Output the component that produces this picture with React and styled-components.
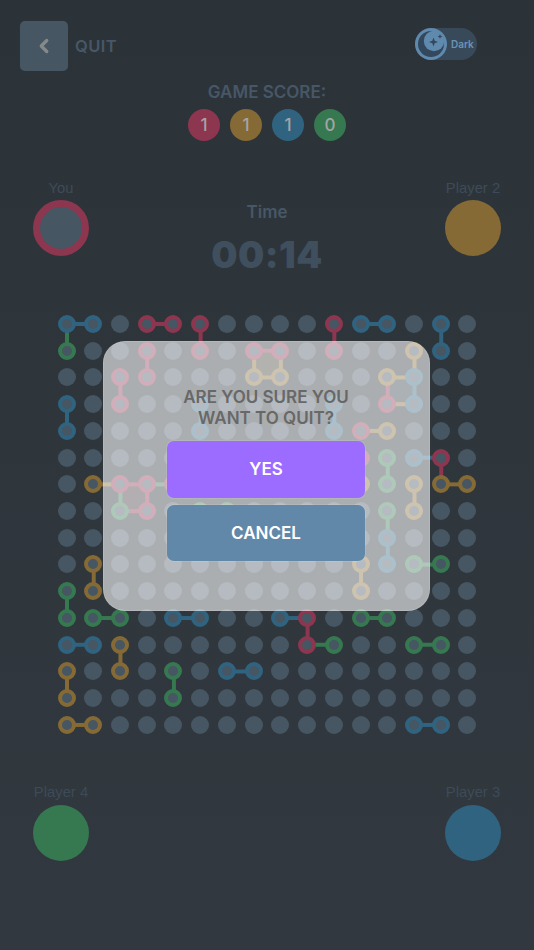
import styled, { createGlobalStyle } from "styled-components";
import { ChevronLeft } from "lucide-react";

const colors = { r: "#8c3650", y: "#856a35", b: "#30637f", g: "#367850" };
const tints = { r: "#8c365033", y: "#856a3533", b: "#30637f33" };
const dotGray = "#465663";
const PITCH = 26.73;

const GlobalStyle = createGlobalStyle`
  html, body {
    margin: 0;
    padding: 0;
    background: #2d343a;
  }
  * {
    box-sizing: border-box;
  }
`;

const Page = styled.div`
  position: relative;
  width: 534px;
  height: 950px;
  overflow: hidden;
  background: linear-gradient(180deg, #2c3338 0%, #31383f 100%);
  font-family: Inter, Roboto, sans-serif;
`;

const Header = styled.header`
  display: flex;
  align-items: flex-start;
  justify-content: space-between;
  padding: 21px 57px 0 20px;
  height: 81px;
`;

const QuitGroup = styled.div`
  display: flex;
  align-items: center;
  gap: 7px;
`;

const BackButton = styled.button`
  display: flex;
  align-items: center;
  justify-content: center;
  width: 48px;
  height: 50px;
  padding: 0;
  border: none;
  border-radius: 5px;
  background: ${dotGray};
  color: #858a88;
`;

const QuitLabel = styled.span`
  font-size: 16.5px;
  font-weight: 600;
  letter-spacing: 0.4px;
  color: #475767;
`;

const Toggle = styled.div`
  display: flex;
  align-items: center;
  width: 62px;
  height: 32px;
  margin-top: 7px;
  border-radius: 16px;
  background: #38495a;
`;

const ToggleText = styled.span`
  margin-left: 4px;
  font-size: 10px;
  font-weight: 600;
  color: #6b93b5;
`;

const ScoreBlock = styled.section`
  display: flex;
  flex-direction: column;
  align-items: center;
  gap: 6px;
  height: 99px;
`;

const SectionTitle = styled.h2`
  margin: 0;
  font-size: 17px;
  line-height: 22px;
  font-weight: 600;
  color: #475767;
`;

const ScoreRow = styled.div`
  display: flex;
  gap: 10px;
`;

const ScoreBadge = styled.div`
  display: flex;
  align-items: center;
  justify-content: center;
  width: 32px;
  height: 32px;
  border-radius: 50%;
  background: ${(p) => colors[p.$tone]};
  font-size: 17px;
  font-weight: 500;
  color: #a3a5a5;
`;

const PlayersRow = styled.section`
  display: flex;
  justify-content: space-between;
  padding: 0 33px;
  height: ${(p) => p.$height}px;
`;

const Player = styled.div`
  display: flex;
  flex-direction: column;
  align-items: center;
  width: 56px;
`;

const PlayerName = styled.span`
  font-family: "Liberation Sans", Arial, sans-serif;
  font-size: 14.8px;
  line-height: 16px;
  white-space: nowrap;
  color: #3d4b58;
`;

const Avatar = styled.div`
  flex: none;
  width: 56px;
  height: 56px;
  margin-top: ${(p) => p.$gap ?? 4}px;
  border-radius: 50%;
  background: ${(p) => (p.$active ? dotGray : colors[p.$tone])};
  border: ${(p) => (p.$active ? `7.5px solid ${colors[p.$tone]}` : "none")};
`;

const Clock = styled.div`
  display: flex;
  flex-direction: column;
  align-items: center;
  padding-top: 21px;
`;

const Timer = styled.div`
  margin-top: 10px;
  font-size: 37px;
  line-height: 44px;
  font-weight: 900;
  letter-spacing: 0.5px;
  color: #3f4f5e;
`;

const Board = styled.div`
  position: relative;
  display: grid;
  grid-template-columns: repeat(16, 18px);
  grid-auto-rows: 18px;
  gap: 8.73px;
  width: 419px;
  margin-left: 57.6px;
  margin-bottom: 50px;
`;

const Links = styled.svg`
  position: absolute;
  left: 0;
  top: 0;
  width: 419px;
  height: 419px;
`;

const Dot = styled.div`
  position: relative;
  border-radius: 50%;
  background: ${dotGray};
  border: ${(p) => (p.$tone ? `4.6px solid ${colors[p.$tone]}` : "none")};
`;

const Dialog = styled.div`
  position: absolute;
  left: 103px;
  top: 341px;
  display: flex;
  flex-direction: column;
  align-items: center;
  width: 327px;
  height: 270px;
  padding: 46px 1px 0 0;
  border-radius: 22px;
  background: rgba(255, 255, 255, 0.6);
  box-shadow: inset 0 0 0 1px rgba(255, 255, 255, 0.12);
`;

const DialogTitle = styled.h3`
  margin: 0 0 12px;
  font-size: 17px;
  line-height: 21px;
  font-weight: 600;
  text-align: center;
  color: #686868;
`;

const DialogButton = styled.button`
  flex: none;
  width: 198px;
  height: 56.5px;
  margin-bottom: 7px;
  border: none;
  border-radius: 7px;
  background: ${(p) => (p.$primary ? "#9c6bff" : "#6288a9")};
  box-shadow: 0 0 0 1px rgba(255, 255, 255, 0.1);
  font-family: inherit;
  font-size: 17px;
  font-weight: 600;
  color: #ffffff;
`;

const rows = [
  "bb.rrr....rbb.b.",
  "g..r.r.rr.r..yb.",
  "..rr...yy...yb..",
  "b.r..b....b.rb..",
  "b....b....bry...",
  "...........rgbr.",
  ".yrrr......ygyyy",
  "..gr.gg.....gy..",
  "............b...",
  ".y.........ybgg.",
  "gy.........y....",
  "ggg.bb..br.gg...",
  "bby......rg..gg.",
  "y.y.g.bb........",
  "y...g...........",
  "yy...........bb.",
];

const links = [
  ["b", 0, 0, 1, 0], ["g", 0, 0, 0, 1], ["r", 3, 0, 4, 0], ["r", 5, 0, 5, 1],
  ["r", 10, 0, 10, 1], ["b", 11, 0, 12, 0], ["b", 14, 0, 14, 1], ["r", 3, 1, 3, 2],
  ["r", 2, 2, 2, 3], ["r", 7, 1, 8, 1], ["y", 7, 1, 7, 2], ["y", 7, 2, 8, 2],
  ["y", 8, 1, 8, 2], ["y", 13, 1, 13, 2], ["y", 12, 2, 13, 2], ["r", 12, 2, 12, 3],
  ["y", 12, 3, 13, 3], ["b", 13, 2, 13, 3], ["b", 0, 3, 0, 4], ["b", 5, 3, 5, 4],
  ["b", 10, 3, 10, 4], ["y", 11, 4, 12, 4], ["b", 13, 5, 14, 5], ["r", 14, 5, 14, 6],
  ["y", 14, 6, 15, 6], ["g", 12, 5, 12, 6], ["y", 13, 6, 13, 7], ["g", 12, 7, 12, 8],
  ["b", 12, 8, 12, 9], ["g", 13, 9, 14, 9], ["y", 11, 9, 11, 10], ["y", 1, 6, 2, 6],
  ["r", 2, 6, 3, 6], ["g", 2, 6, 2, 7], ["r", 2, 7, 3, 7], ["r", 3, 6, 3, 7],
  ["g", 3, 6, 4, 6], ["r", 11, 5, 11, 6], ["g", 5, 7, 6, 7], ["y", 1, 9, 1, 10],
  ["g", 0, 10, 0, 11], ["g", 1, 11, 2, 11], ["b", 4, 11, 5, 11], ["b", 8, 11, 9, 11],
  ["r", 9, 11, 9, 12], ["g", 9, 12, 10, 12], ["g", 11, 11, 12, 11], ["g", 13, 12, 14, 12],
  ["b", 0, 12, 1, 12], ["y", 2, 12, 2, 13], ["y", 0, 13, 0, 14], ["g", 4, 13, 4, 14],
  ["b", 6, 13, 7, 13], ["y", 0, 15, 1, 15], ["b", 13, 15, 14, 15],
];

const boxes = [
  ["y", 7, 1],
  ["r", 2, 6],
  ["b", 12, 2],
];

const at = (n) => 9 + n * PITCH;

function MoonIcon() {
  return (
    <svg width="32" height="32" viewBox="0 0 32 32" style={{ flex: "none" }}>
      <circle cx="16" cy="16" r="16" fill="#5f8aae" />
      <circle cx="16" cy="16" r="13" fill="#33485c" />
      <circle cx="19" cy="13" r="10.2" fill="#5f8aae" />
      <path d="M18.5 9.5l1.2 3.3 3.3 1.2-3.3 1.2-1.2 3.3-1.2-3.3-3.3-1.2 3.3-1.2Z" fill="#33485c" />
      <path d="M25 6l.7 1.8 1.8.7-1.8.7-.7 1.8-.7-1.8-1.8-.7 1.8-.7Z" fill="#33485c" />
    </svg>
  );
}

export default function App() {
  return (
    <Page>
      <GlobalStyle />
      <Header>
        <QuitGroup>
          <BackButton>
            <ChevronLeft size={22} strokeWidth={3.6} />
          </BackButton>
          <QuitLabel>QUIT</QuitLabel>
        </QuitGroup>
        <Toggle>
          <MoonIcon />
          <ToggleText>Dark</ToggleText>
        </Toggle>
      </Header>

      <ScoreBlock>
        <SectionTitle>GAME SCORE:</SectionTitle>
        <ScoreRow>
          <ScoreBadge $tone="r">1</ScoreBadge>
          <ScoreBadge $tone="y">1</ScoreBadge>
          <ScoreBadge $tone="b">1</ScoreBadge>
          <ScoreBadge $tone="g">0</ScoreBadge>
        </ScoreRow>
      </ScoreBlock>

      <PlayersRow $height={135}>
        <Player>
          <PlayerName>You</PlayerName>
          <Avatar $tone="r" $active />
        </Player>
        <Clock>
          <SectionTitle>Time</SectionTitle>
          <Timer>00:14</Timer>
        </Clock>
        <Player>
          <PlayerName>Player 2</PlayerName>
          <Avatar $tone="y" />
        </Player>
      </PlayersRow>

      <Board>
        <Links viewBox="0 0 419 419">
          {boxes.map(([tone, c, r]) => (
            <rect key={`${c}-${r}`} x={at(c)} y={at(r)} width={PITCH} height={PITCH} fill={tints[tone]} />
          ))}
          {links.map(([tone, c1, r1, c2, r2]) => (
            <line
              key={`${c1}-${r1}-${c2}-${r2}`}
              x1={at(c1)}
              y1={at(r1)}
              x2={at(c2)}
              y2={at(r2)}
              stroke={colors[tone]}
              strokeWidth="4"
            />
          ))}
        </Links>
        {rows.map((row, r) =>
          row.split("").map((ch, c) => <Dot key={`${r}-${c}`} $tone={ch === "." ? undefined : ch} />)
        )}
      </Board>

      <PlayersRow $height={77}>
        <Player>
          <PlayerName>Player 4</PlayerName>
          <Avatar $tone="g" $gap={5} />
        </Player>
        <Player>
          <PlayerName>Player 3</PlayerName>
          <Avatar $tone="b" $gap={5} />
        </Player>
      </PlayersRow>

      <Dialog>
        <DialogTitle>
          ARE YOU SURE YOU
          <br />
          WANT TO QUIT?
        </DialogTitle>
        <DialogButton $primary>YES</DialogButton>
        <DialogButton>CANCEL</DialogButton>
      </Dialog>
    </Page>
  );
}
